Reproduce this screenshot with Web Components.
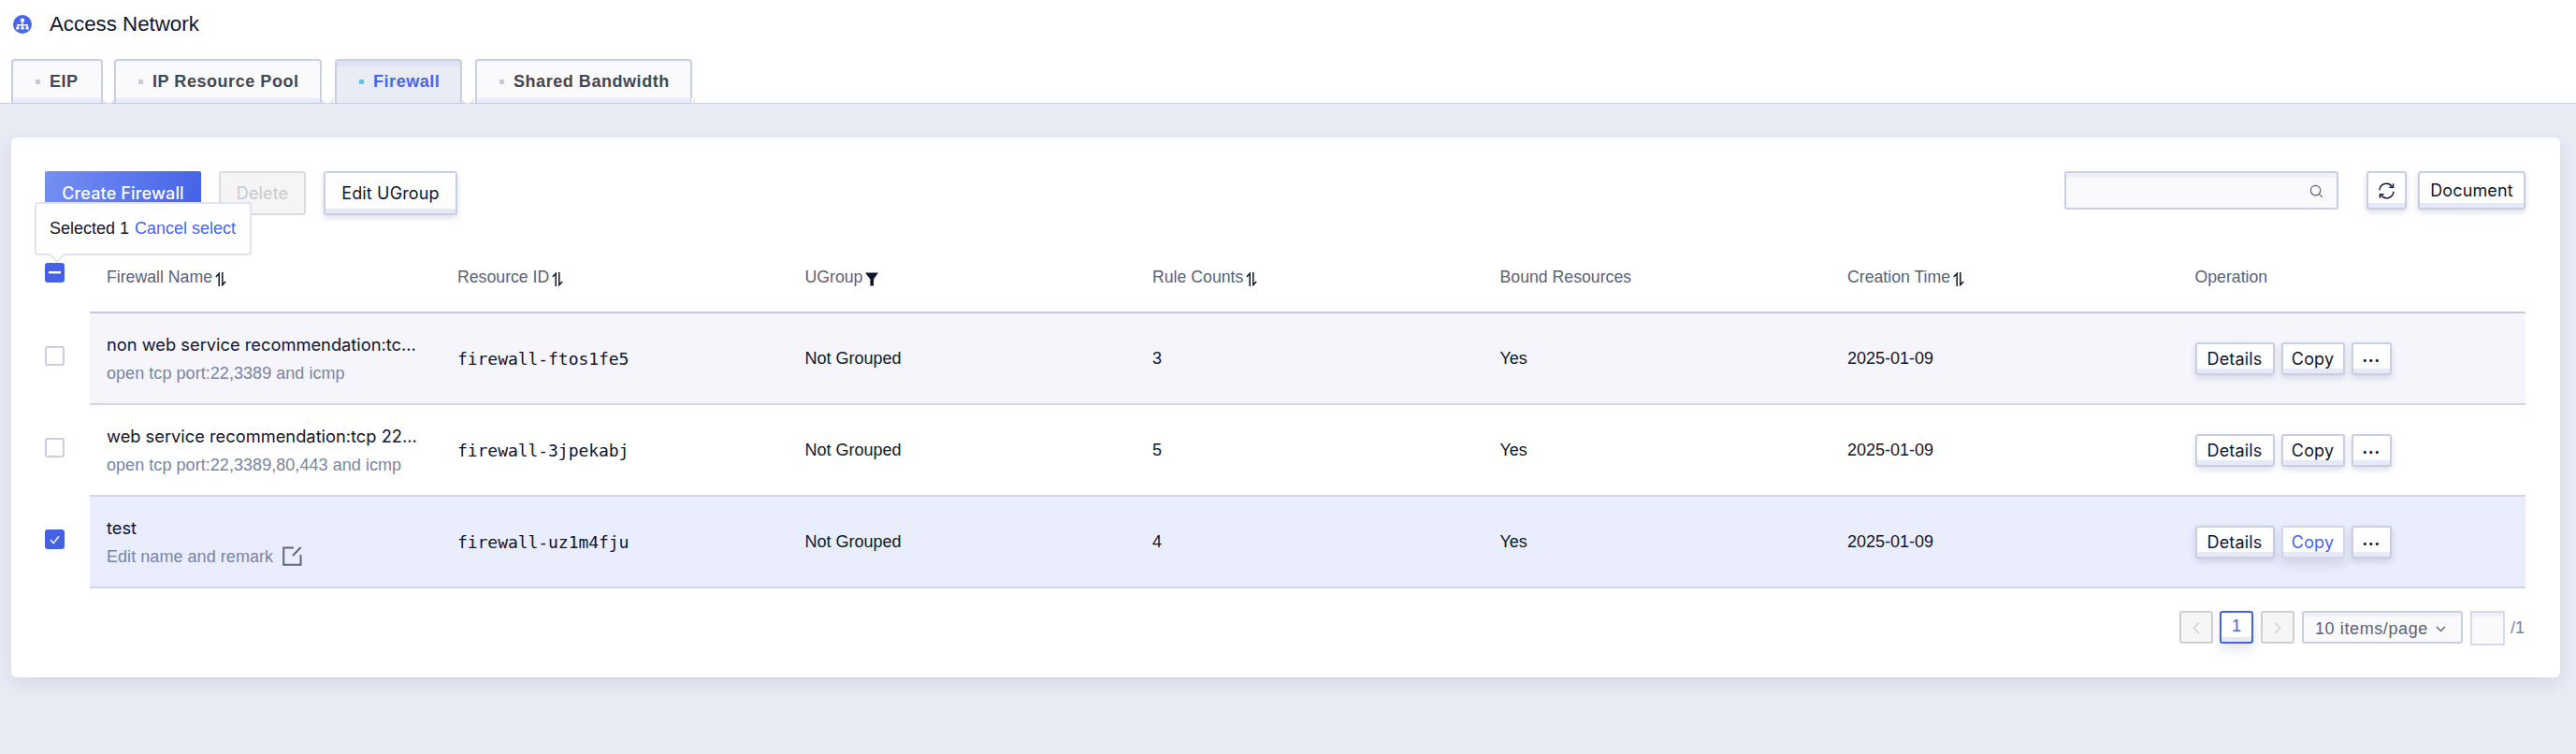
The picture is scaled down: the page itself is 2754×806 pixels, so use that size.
<!DOCTYPE html>
<html>
<head>
<meta charset="utf-8">
<title>Access Network</title>
<style>
  html, body { margin: 0; padding: 0; }
  body {
    background: #e9ebf5;
    font-family: "Liberation Sans", Arial, sans-serif;
    color: #10152e;
    min-height: 806px;
  }
</style>
</head>
<body>
<page-header></page-header>
<fw-card>
  <fw-toolbar slot="toolbar"></fw-toolbar>
  <fw-table slot="table"></fw-table>
  <fw-pager slot="pager"></fw-pager>
</fw-card>

<script>
const SORT_ICON = `<svg width="12" height="15" viewBox="0 0 12 15" fill="none" stroke="#10152e" stroke-width="1.5">
  <path d="M4.2 15V1.4L.8 5"/><path d="M7.8 0v13.6L11.2 10"/></svg>`;

class PageHeader extends HTMLElement {
    constructor() {
        super();
        this.attachShadow({ mode: 'open' });
    }

    connectedCallback() {
        // fixed widths, the labels alone leave the tabs a few pixels off
        const tabs = [['EIP', 98], ['IP Resource Pool', 222], ['Firewall', 136], ['Shared Bandwidth', 232]];
        this.shadowRoot.innerHTML = `
            <style>
                :host { display: block; background: #fff; height: 111px; box-sizing: border-box; border-bottom: 1px solid #c9cee2; }
                .title { display: flex; align-items: center; height: 52px; padding: 0 0 0 14px; }
                .title svg { margin-right: 19px; }
                .title span { font-size: 22.3px; color: #10152e; }
                .tabs { display: flex; gap: 14px; padding: 11px 0 0 12px; }
                fw-tab:first-child { margin-right: -2px; }
            </style>
            <div class="title">
                <svg width="20" height="20" viewBox="0 0 20 20">
                    <circle cx="10" cy="10" r="10" fill="#4766e8"/>
                    <path d="M4.9 14v-3.2h10.2V14M10 7v7" fill="none" stroke="#fff" stroke-width="1.4"/>
                    <g fill="#fff">
                        <rect x="8" y="3.8" width="4" height="3.8" rx=".8"/>
                        <rect x="3.4" y="12.6" width="3" height="3" rx=".6"/>
                        <rect x="8.5" y="12.6" width="3" height="3" rx=".6"/>
                        <rect x="13.6" y="12.6" width="3" height="3" rx=".6"/>
                    </g>
                </svg>
                <span>Access Network</span>
            </div>
            <div class="tabs">
                ${tabs.map(t => `<fw-tab style="width:${t[1]}px" ${t[0] === 'Firewall' ? 'active' : ''}>${t[0]}</fw-tab>`).join('')}
            </div>
        `;
    }
}

class FwTab extends HTMLElement {
    constructor() {
        super();
        this.attachShadow({ mode: 'open' });
        this.shadowRoot.innerHTML = `
            <style>
                :host {
                    display: flex; align-items: center; height: 47px; box-sizing: border-box;
                    padding: 0 0 0 24px; position: relative; white-space: nowrap;
                    background: #fafafd; border: 2px solid #c9cee2; border-bottom: 0;
                    border-radius: 4px 4px 0 0;
                    box-shadow: inset 0 -5px 0 #e8ebf8;
                    font: 700 18px "Liberation Sans", Arial, sans-serif; letter-spacing: .55px; color: #444650;
                }
                :host([active]) {
                    background: #e9ebf5; color: #4766e8;
                    box-shadow: inset 0 6px 0 #dfe2f0;
                }
                i { width: 5px; height: 5px; background: #c9ccd6; margin-right: 10px; flex: none; }
                :host([active]) i { background: #63c3ea; }
                b {
                    position: absolute; right: -15px; bottom: -1px; width: 14px; height: 6px; box-sizing: border-box;
                    background: #fff; border: 1px solid #d5d9ea; border-top: 0;
                    border-radius: 0 0 7px 7px; z-index: 1;
                }
                :host(:last-child) b { right: -5px; width: 4px; border-left: 0; border-radius: 0 0 4px 0; }
            </style>
            <i></i><slot></slot><b></b>
        `;
    }
}

class FwButton extends HTMLElement {
    constructor() {
        super();
        this.attachShadow({ mode: 'open' });
        this.shadowRoot.innerHTML = `
            <style>
                :host {
                    display: inline-flex; align-items: center; justify-content: center;
                    box-sizing: border-box; height: var(--h, 41px); padding: 0 var(--px, 14px);
                    background: #fff; color: #10152e;
                    border: 2px solid #c9cee2; border-radius: 3px;
                    box-shadow: inset 0 -5px 0 #e6e9f8, 0 3px 6px rgba(60,70,120,.18);
                    font: 400 var(--fs, 18px) Inter, "Liberation Sans", sans-serif;
                    letter-spacing: .15px; white-space: nowrap;
                }
                :host([primary]) {
                    background: linear-gradient(100deg, #7490f3, #4562e6); color: #fff;
                    border: 0; box-shadow: none; font-weight: 500; border-radius: 2px;
                }
                :host([disabled]) {
                    background: #f5f5f6; color: #c9cacd; border-color: #dcdcde; box-shadow: none;
                }
                :host([link]) { color: #4766e8; border-color: #d2d6e6; box-shadow: inset 0 -5px 0 #e6e9f8, 0 6px 12px rgba(60,70,120,.16); }
            </style>
            <slot></slot>
        `;
    }
}

class FwToolbar extends HTMLElement {
    constructor() {
        super();
        this.attachShadow({ mode: 'open' });
        this.shadowRoot.innerHTML = `
            <style>
                :host { display: flex; align-items: flex-start; height: 47px; }
                .left { display: flex; gap: 19px; --h: 47px; }
                .right { margin-left: auto; display: flex; align-items: flex-start; --h: 41px; }
                .search {
                    width: 293px; height: 41px; box-sizing: border-box; margin-right: 30px;
                    border: 2px solid #c9cee2; border-radius: 3px; background: #fafafd;
                    box-shadow: inset 0 5px 0 #f0f0f4;
                    display: flex; align-items: center; justify-content: flex-end; padding: 2px 14px 0 0;
                }
                fw-button.doc { margin-left: 12px; }
            </style>
            <div class="left">
                <fw-button primary style="width:167px">Create Firewall</fw-button>
                <fw-button disabled style="width:93px">Delete</fw-button>
                <fw-button style="width:143px">Edit UGroup</fw-button>
            </div>
            <div class="right">
                <div class="search">
                    <svg width="15" height="15" viewBox="0 0 15 15" fill="none" stroke="#5c6378" stroke-width="1.2">
                        <circle cx="6.6" cy="6.6" r="5.2"/><path d="M10.4 10.4l3.4 3.4"/>
                    </svg>
                </div>
                <fw-button style="width:43px;--px:0">
                    <svg width="19" height="18" viewBox="0 0 19 18" fill="none" stroke="#10152e" stroke-width="1.5">
                        <path d="M2 8.2A7.4 7.4 0 0 1 15.4 4.4"/><path d="M16.6 1.2v4h-4.2" stroke-width="1.4"/>
                        <path d="M17 9.8A7.4 7.4 0 0 1 3.6 13.6"/><path d="M2.4 16.8v-4h4.2" stroke-width="1.4"/>
                    </svg>
                </fw-button>
                <fw-button class="doc" style="width:115px;--px:0">Document</fw-button>
            </div>
        `;
    }
}

class FwCheckbox extends HTMLElement {
    constructor() {
        super();
        this.attachShadow({ mode: 'open' });
        this.shadowRoot.innerHTML = `
            <style>
                :host {
                    display: inline-flex; width: 21px; height: 21px; box-sizing: border-box;
                    align-items: center; justify-content: center;
                    border: 2px solid #c9cee2; border-radius: 3px; background: #fff;
                }
                :host([checked]), :host([mixed]) { background: #4562e6; border: 0; }
                svg { display: none; }
                :host([checked]) .c, :host([mixed]) .m { display: block; }
            </style>
            <svg class="c" width="11" height="10" viewBox="0 0 11 10" fill="none" stroke="#fff" stroke-width="1.4"><path d="M1 5l3.2 3.6L10 1.2"/></svg>
            <svg class="m" width="13" height="3" viewBox="0 0 13 3"><rect width="13" height="2.4" fill="#fff"/></svg>
        `;
    }
}

class FwRow extends HTMLElement {
    constructor() {
        super();
        this.attachShadow({ mode: 'open' });
        this.shadowRoot.innerHTML = `
            <style>
                :host {
                    display: grid; grid-template-columns: 48px 375px repeat(5, 371.5px) 1fr;
                    height: 98px; align-items: stretch;
                    font: 18px "Liberation Sans", Arial, sans-serif; color: #10152e;
                }
                :host([head]) { height: 75px; font-size: 17.7px; color: #5a6276; }
                ::slotted(*) { box-sizing: border-box; display: flex; align-items: center; padding-left: 18px; min-width: 0; background: var(--row-bg, transparent); border-bottom: 2px solid var(--line, #d2d6e8); }
                ::slotted([slot="check"]) { padding: 0 0 var(--check-pad, 7px); background: transparent; border-bottom: 0; }
            </style>
            <slot name="check"></slot><slot></slot>
        `;
    }
}

class FwTable extends HTMLElement {
    constructor() {
        super();
        this.attachShadow({ mode: 'open' });
    }

    connectedCallback() {
        const heads = [
            ['Firewall Name', SORT_ICON],
            ['Resource ID', SORT_ICON],
            ['UGroup', `<svg width="14" height="15" viewBox="0 0 14 15"><path d="M0 .5h14L9 7.5v7H5.4v-7z" fill="#10152e"/></svg>`],
            ['Rule Counts', SORT_ICON],
            ['Bound Resources', ''],
            ['Creation Time', SORT_ICON],
            ['Operation', '']
        ];
        const rows = [
            { name: 'non web service recommendation:tc...', remark: 'open tcp port:22,3389 and icmp', id: 'firewall-ftos1fe5', rules: 3, bg: '#f5f5fb' },
            { name: 'web service recommendation:tcp 22...', remark: 'open tcp port:22,3389,80,443 and icmp', id: 'firewall-3jpekabj', rules: 5, bg: '#fff' },
            { name: 'test', remark: 'Edit name and remark', id: 'firewall-uz1m4fju', rules: 4, bg: '#e9edfc', selected: true }
        ];
        this.shadowRoot.innerHTML = `
            <style>
                :host { display: block; margin-top: 30px; position: relative; }
                .nm { display: flex; flex-direction: column; gap: 9px; }
                .t { font: 18.3px/22px Inter, sans-serif; color: #10152e; white-space: nowrap; }
                .s { font: 18px/22px "Liberation Sans", sans-serif; letter-spacing: .05px; color: #7a84a2; white-space: nowrap; display: flex; align-items: center; }
                .s svg { margin-left: 10px; }
                .id { font: 18px "DejaVu Sans Mono", monospace; letter-spacing: -.05px; }
                .ops { display: flex; gap: 7px; --h: 35px; --fs: 18px; }
                .hd svg { margin: 3px 0 0 3px; }
                .tip {
                    position: absolute; left: -11px; top: -44px; width: 232px; height: 57px; box-sizing: border-box;
                    background: #fff; border: 2px solid #dfe2f2; border-radius: 4px; z-index: 2;
                    display: flex; align-items: center; padding: 0 0 0 14px;
                    font: 18px "Liberation Sans", sans-serif; color: #10152e; white-space: nowrap;
                }
                .tip a { color: #4766e8; margin-left: 6px; }
                .tip::after {
                    content: ""; position: absolute; left: 15px; bottom: -8px; width: 12px; height: 12px;
                    background: #fff; border-right: 2px solid #dfe2f2; border-bottom: 2px solid #dfe2f2; transform: rotate(45deg) scale(.9);
                }
            </style>
            <div class="tip"><span>Selected 1</span><a>Cancel select</a></div>
            <fw-row head style="--line:#c5cadf;--check-pad:12px">
                <div slot="check"><fw-checkbox mixed></fw-checkbox></div>
                ${heads.map(h => `<div class="hd">${h[0]}${h[1]}</div>`).join('')}
            </fw-row>
            ${rows.map(r => `
            <fw-row style="--row-bg:${r.bg}">
                <div slot="check"><fw-checkbox ${r.selected ? 'checked' : ''}></fw-checkbox></div>
                <div><div class="nm"><span class="t">${r.name}</span><span class="s">${r.remark}${r.selected ? `
                    <svg width="21" height="21" viewBox="0 0 21 21" fill="none" stroke="#5f667c" stroke-width="2"><path d="M12 1.5H1.2v18.3h18.3V9"/><path d="M19.6 1L11 10"/></svg>` : ''}</span></div></div>
                <div class="id">${r.id}</div>
                <div>Not Grouped</div>
                <div>${r.rules}</div>
                <div>Yes</div>
                <div>2025-01-09</div>
                <div><div class="ops">
                    <fw-button style="width:85px;--px:0">Details</fw-button>
                    <fw-button ${r.selected ? 'link' : ''} style="width:68px;--px:0">Copy</fw-button>
                    <fw-button style="width:43px;--px:0"><b style="letter-spacing:.5px;font-weight:700;position:relative;top:-3px">...</b></fw-button>
                </div></div>
            </fw-row>`).join('')}
        `;
    }
}

class FwPager extends HTMLElement {
    constructor() {
        super();
        this.attachShadow({ mode: 'open' });
        this.shadowRoot.innerHTML = `
            <style>
                :host { display: flex; justify-content: flex-end; align-items: flex-start; margin-top: 24px; height: 36px; font: 18px "Liberation Sans", sans-serif; color: #5a6276; }
                .pg { width: 36px; height: 35px; box-sizing: border-box; border: 2px solid #cfcfd3; border-radius: 3px; background: #f6f6f7; display: flex; align-items: center; justify-content: center; }
                .cur { margin: 0 8px 0 7px; border-color: #4562e6; background: #fff; color: #4766e8; box-shadow: inset 0 -5px 0 #e6e9f8, 0 6px 12px rgba(60,70,120,.14); padding-bottom: 3px; }
                .sel {
                    width: 172px; height: 35px; box-sizing: border-box; margin-left: 8px;
                    border: 2px solid #c9cee2; border-radius: 3px; background: #fafafd; box-shadow: inset 0 4px 0 #f0f0f4;
                    display: flex; align-items: center; padding: 3px 16px 0 12px; justify-content: space-between;
                    letter-spacing: .6px;
                }
                .jump { width: 37px; height: 37px; box-sizing: border-box; margin-left: 8px; border: 2px solid #d6daec; background: #fafafd; box-shadow: inset 0 4px 0 #f0f0f4; }
                .tot { margin-left: 6px; line-height: 37px; width: 16px; overflow: hidden; color: #7a84a2; }
            </style>
            <div class="pg"><svg width="8" height="14" viewBox="0 0 8 14" fill="none" stroke="#cfcfd3" stroke-width="1.4"><path d="M7 1.5L1.5 7.5 7 13"/></svg></div>
            <div class="pg cur">1</div>
            <div class="pg"><svg width="8" height="14" viewBox="0 0 8 14" fill="none" stroke="#cfcfd3" stroke-width="1.4"><path d="M1 1.5l5.5 6L1 13"/></svg></div>
            <div class="sel"><span>10 items/page</span><svg width="11" height="7" viewBox="0 0 11 7" fill="none" stroke="#5a6276" stroke-width="1.4"><path d="M1 1l4.5 4.5L10 1"/></svg></div>
            <div class="jump"></div>
            <div class="tot">/1</div>
        `;
    }
}

class FwCard extends HTMLElement {
    constructor() {
        super();
        this.attachShadow({ mode: 'open' });
        this.shadowRoot.innerHTML = `
            <style>
                :host {
                    display: block; box-sizing: border-box;
                    margin: 36px 17px 0 12px; padding: 36px 37px 35px 36px;
                    background: #fff; border-radius: 6px;
                    box-shadow: 0 6px 20px rgba(60,70,120,.12);
                }
            </style>
            <slot name="toolbar"></slot>
            <slot name="table"></slot>
            <slot name="pager"></slot>
        `;
    }
}

customElements.define('page-header', PageHeader);
customElements.define('fw-tab', FwTab);
customElements.define('fw-button', FwButton);
customElements.define('fw-toolbar', FwToolbar);
customElements.define('fw-checkbox', FwCheckbox);
customElements.define('fw-row', FwRow);
customElements.define('fw-table', FwTable);
customElements.define('fw-pager', FwPager);
customElements.define('fw-card', FwCard);
</script>
</body>
</html>
